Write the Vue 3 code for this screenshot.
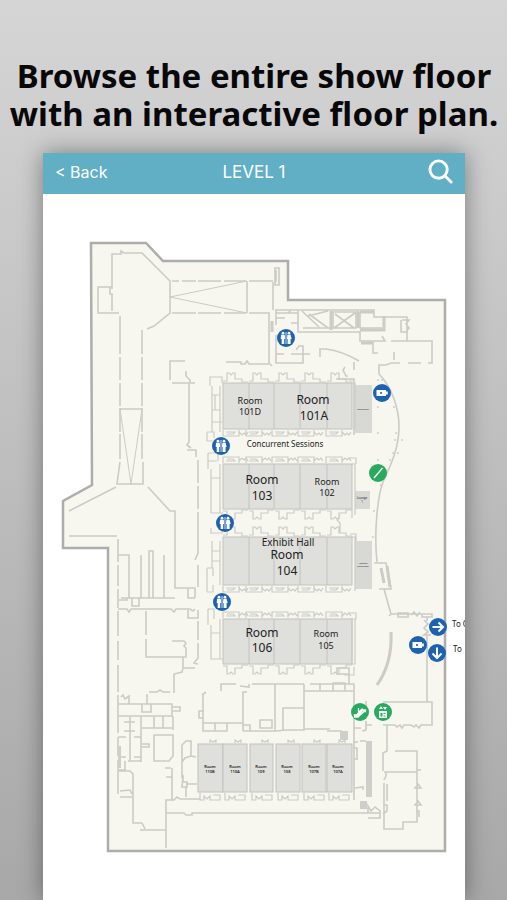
<script setup>
const roomRows = [
  { y: 383, h: 46 },
  { y: 464, h: 45 },
  { y: 537, h: 48 },
  { y: 619, h: 45 },
]
const dividers = [249, 274, 300, 327]

const smallRooms = [
  { x: 198, w: 25, cx: 210, name: '110B' },
  { x: 223, w: 24, cx: 235, name: '110A' },
  { x: 250, w: 23, cx: 261, name: '109' },
  { x: 276, w: 24, cx: 287, name: '108' },
  { x: 302, w: 24, cx: 314, name: '107B' },
  { x: 327, w: 25, cx: 338, name: '107A' },
]

const labels = [
  { x: 250, y: 404, size: 9, text: 'Room' },
  { x: 250, y: 415, size: 9, text: '101D' },
  { x: 313, y: 404, size: 12, text: 'Room' },
  { x: 314, y: 420, size: 12, text: '101A' },
  { x: 285, y: 447, size: 8, text: 'Concurrent Sessions' },
  { x: 262, y: 484, size: 12, text: 'Room' },
  { x: 262, y: 500, size: 12, text: '103' },
  { x: 327, y: 485, size: 9, text: 'Room' },
  { x: 327, y: 496, size: 9, text: '102' },
  { x: 288, y: 546, size: 10, text: 'Exhibit Hall' },
  { x: 287, y: 559, size: 12, text: 'Room' },
  { x: 287, y: 575, size: 12, text: '104' },
  { x: 262, y: 637, size: 12, text: 'Room' },
  { x: 262, y: 652, size: 12, text: '106' },
  { x: 326, y: 637, size: 9, text: 'Room' },
  { x: 326, y: 649, size: 9, text: '105' },
  { x: 363, y: 410, size: 2, text: 'Registration' },
  { x: 362, y: 499, size: 3, text: 'Lounge' },
  { x: 362, y: 503, size: 3, text: '1' },
  { x: 363, y: 564, size: 2, text: 'Attendee' },
  { x: 363, y: 567, size: 2, text: 'Registration' },
]

const pins = [
  { x: 286, y: 338, icon: 'restroom' },
  { x: 221, y: 446, icon: 'restroom' },
  { x: 225, y: 523, icon: 'restroom' },
  { x: 222, y: 602, icon: 'restroom' },
  { x: 382, y: 393, icon: 'charge' },
  { x: 418, y: 645, icon: 'charge' },
  { x: 438, y: 627, icon: 'right' },
  { x: 437, y: 653, icon: 'down' },
  { x: 378, y: 473, icon: 'stairs' },
  { x: 360, y: 712, icon: 'escalator' },
  { x: 383, y: 712, icon: 'lift' },
]
const green = ['stairs', 'escalator', 'lift']

// Door vestibules hang off a row of rooms; dir is 1 below the row, -1 above it.
const vestibules = (y, dir) =>
  [227, 253, 279, 305, 331]
    .map((x) => `M${x - 4} ${y + dir * 2}h4v${dir * 8}h2l2 ${-dir * 2}l2 ${dir * 2}h2v${-dir * 6}h7v${-dir * 3}h6`)
    .join('')

// Service closets alternating with double doors.
const closets = (y, dir) =>
  [223, 246, 272, 298, 326]
    .map((x) => `M${x} ${y + dir}v${dir * 6}h16v${-dir * 6}M${x + 3} ${y + dir * 3}h9l-2 ${dir * 2}h-6M${x + 16} ${y + dir * 3}l3 ${dir * 3}l2 ${-dir * 2}l2 ${dir * 2}l2 ${-dir * 3}`)
    .join('')

const doorPaths = [
  vestibules(383, -1),
  closets(429, 1),
  closets(464, -1),
  vestibules(509, 1),
  vestibules(537, -1),
  closets(585, 1),
  closets(619, -1),
  vestibules(664, 1),
].join('')

const smallDoors = smallRooms
  .map((r) => `M${r.x + 2} 793v7h4v-4l3 3l3 -3v4h10v-5h-7M${r.x + 12} 743v-3l3 2l3 -2v3`)
  .join('')

const outline = 'M91 243H146L163 261H288V300H445V851H108V548H63V501L92 485Z'

const walls = [
  // north-west lobby
  'M112 289V254H121V251L124 253H142L170 281V313L154 326L147 329M112 287H98V313H119M110 287V294H112V311',
  'M120 316V354M120 357V380M120 383V406M120 408V432M120 434V459M120 462L117 484H143V462M142 330V354M142 357V380M142 383V406M142 408V432M142 434V459',
  'M120 409H142',
  'M172 281H179M182 281H196M198 281H221M224 281H246M249 281H273M172 313H196M198 313H221M224 313H246M249 313H270',
  'M247 281V313M273 282V310M275 268H279V285H275ZM276 270V282',
  'M170 380V361H185M186 371V376L190 380V382M172 383H195M189 383V442L187 445L191 448M187 450H196V457M198 460V483M198 486V509M198 512V553L195 560M198 565V587',
  // west wing
  'M69 511L116 487M148 487L170 511H175V588H195V598M69 536H117M118 539V562M118 565V586M118 589V608M118 611V636M118 641V660M118 665V692M118 695V711',
  'M118 555H129V598M141 555V598M149 551H153V598H149ZM164 555V598M121 598H175M132 598H139V606H132ZM119 600H127V598M188 588V598H195',
  'M118 609H127L129 612L131 609H171L174 612L176 609H190L193 611L195 609M188 610V618H198V610M198 621V640M198 643V658L194 663L198 664',
  'M146 611V635M146 639V657H186V648L184 646L186 643L184 641H172M183 657V668H195M183 668L182 672L174 674V693M149 692H157L160 690L163 692H170M147 694V704',
  'M118 704H172V716H118ZM142 704H151V712H142ZM173 707H180V711H173M118 716V733M118 737V756M118 760V794M121 697L123 695L125 699L129 696V704',
  'M130 717V761M141 717V762M118 737H126M134 737H141M124 722H135M124 731H135M118 757H126M134 757H141M128 761H141M125 761V770H118M119 771H130L133 774V823H142L145 829M140 830H166M120 791L130 790L132 794M120 797H132',
  'M142 728H153M154 716V728H163M163 716V728H173M173 716V730M142 744H149V747H142M154 735H173V756L169 761H154ZM172 768V800M165 768H171M166 777H172M166 848V800H174L177 797L180 799M166 813H184L186 815H192V813H362',
  'M182 778V745L186 741H191V756L185 758L182 762M191 756L196 757M183 775V782H187V787H182ZM186 787V797M186 784H197M180 799H200',
  // meeting rooms in the centre south
  'M221 691V684H236M240 686L249 687V684M252 684H304M203 695V723H243M202 695L206 692M203 723V731H227V723M215 723V731M204 711H199V718H203M243 731V692H247M275 684V731M243 725H250V731H243M243 731H276L286 730H304V684M283 731V708H304M260 720H272V728H260Z',
  'M310 684H354V722M304 691H354M304 729H330M327 731H342M320 684V691M333 691V683H345V691M349 684V668H337V674H349',
  // restrooms and loading, north
  'M226 362H241V364H245L247 361L249 364H269M269 313V363L272 366M276 313H298V323H291M276 310V325M276 335V363H303V346H299L296 350M276 354H284M291 354H310M276 318H285M288 313L291 310',
  'M298 310V332H360M303 328H330M302 311L319 327M328 311L308 316M309 314L328 328M333 312H356V328H333ZM334 328L355 313M335 314L354 328M360 312V328H382',
  'M275 310H374V317H407V341H391M360 331V341H385L382 336M373 341V353H378M391 341H432V363H428M391 363H400M408 363H421M394 352V360M402 320H409L406 324L409 328L406 332H401V320',
  'M320 357V349H326Q342 351 359 361M354 362V370M345 367L343 370L346 376H348M336 379H354V435',
  // concourse facade
  'M391 363L386 365H379V374C391 386 399 407 399 427C399 450 389 468 383 482C377 498 374 535 377 562M374 563H386L391 589H379M384 589L391 614L389 616M391 614H432V617H422V614M398 613H408V617H398ZM411 615L414 612L417 616L420 612M427 617V621M424 620L428 624L424 628L428 632L424 635H431',
  'M427 636V702M383 702H432V725H421L419 728L416 725L414 727L411 725H404L402 728L400 725L397 727L395 725H383M387 725V751L383 753V771M395 751H417V822H403V829H384V783M384 772H417M417 770H421M386 773V776L384 780M387 784V801M384 805H387V811L383 814',
  'M415 788H421L418 784ZM415 805H421L418 801ZM417 811H419V817',
  // service core, south-east
  'M354 692V748H357V759H354M354 800V742H358M366 701V711M366 721V730L362 731M366 725H372M361 728H354M366 741H360M355 759H358M355 788L363 787V790M368 813V806L371 811L375 807L380 811V818H368M362 813H380',
].join('')

// Left-hand service strip along the session rooms.
const serviceStrip = [
  'M222 383V377H210V386M212 386V432M212 395H220M212 410H220M215 395V410M220 386V432M212 422H222M207 432H214V438M207 432V441M207 441H214M208 453V469M208 461H217M211 469V513M211 478H220M220 464V513M211 513H223M208 453H218V461',
  'M211 528V533H223M212 541V568M212 551H220M212 561H220M220 541V585M207 568H213V576M207 568V592M207 592H213V585M208 609V625M208 609H214V619M211 625V659H223M220 619V659M211 633H220',
].join('')

const rightStrip =
  'M352 383H355V429M349 380H354M352 464H355V509M348 458H356V464M352 509V518M355 515V509M352 537H355V591M350 534H356V541M348 613H356V619H350M352 619V664H355V619M344 675H354V667M340 533V523L337 520L340 515'

const facadeStuds = [
  [378, 380], [382, 380], [378, 407], [394, 407], [378, 433], [396, 433], [402, 440],
  [395, 440], [398, 453], [393, 453], [378, 460], [390, 460], [381, 485], [374, 511], [373, 537],
]
</script>

<template>
  <main class="page">
    <h1 class="headline">Browse the entire show floor with an interactive floor plan.</h1>
    <section class="device">
      <header class="bar">
        <button class="back" type="button">&lt; Back</button>
        <h2 class="title">LEVEL 1</h2>
        <button class="search" type="button" aria-label="Search">
          <svg viewBox="0 0 26 26">
            <circle cx="11" cy="11" r="9" />
            <path d="M17.500 17.500L24 24" />
          </svg>
        </button>
      </header>

      <svg class="plan" viewBox="43 194 422 706" role="img" aria-label="Level 1 floor plan">
        <path class="outline" :d="outline" />

        <g class="rooms">
          <rect v-for="r in roomRows" :key="r.y" x="223" :y="r.y" width="129" :height="r.h" />
          <path v-for="r in roomRows" :key="'d' + r.y" :d="dividers.map((x) => `M${x} ${r.y}v${r.h}`).join('')" />
          <rect v-for="r in smallRooms" :key="r.name" :x="r.x" y="744" :width="r.w" height="48" />
        </g>
        <g class="annex">
          <rect x="355" y="385" width="17" height="48" />
          <rect x="355" y="491" width="15" height="18" />
          <rect x="355" y="541" width="17" height="48" />
        </g>

        <path class="wall" :d="walls" />
        <path class="wall thin" d="M247 281L170 297L247 313M120 409L131 484L142 409" />
        <path class="wall light" :d="doorPaths + smallDoors + serviceStrip + rightStrip" />
        <path class="wall heavy" d="M272 321V332M331 311V330M358 311V328M360 330H384V316M361 343H373M360 312H374M381 568L384 583M387 566L390 587" />
        <path class="wall curve" d="M391 632C392 655 387 671 377 685" />
        <path class="core" d="M340 731H348V740H340ZM366 741H372V797H366ZM360 801H367V809H360ZM118 746H121V768H118Z" />
        <circle v-for="(s, i) in facadeStuds" :key="i" class="stud" :cx="s[0]" :cy="s[1]" r="1" />

        <g class="labels">
          <text v-for="(l, i) in labels" :key="i" :x="l.x" :y="l.y" :font-size="l.size">{{ l.text }}</text>
          <g v-for="r in smallRooms" :key="r.name" class="tiny">
            <text :x="r.cx" y="768">Room</text>
            <text :x="r.cx" y="773">{{ r.name }}</text>
          </g>
        </g>
        <g class="exits">
          <text x="452" y="627">To C</text>
          <text x="453" y="652">To</text>
        </g>

        <g v-for="(p, i) in pins" :key="i" class="pin" :transform="`translate(${p.x} ${p.y})`">
          <circle r="9" :class="green.includes(p.icon) ? 'green' : 'blue'" />
          <g v-if="p.icon === 'restroom'" class="solid">
            <circle cx="-3" cy="-4.800" r="1.400" />
            <circle cx="3" cy="-4.800" r="1.400" />
            <path d="M-5 -3.200H-1.200L-0.900 1H-1.800V6H-4.300V1H-5.300ZM1.400 -3.200H4.600L5.700 1H4.600V6H1.600V1H0.900Z" />
            <rect x="-0.400" y="-6" width="0.800" height="12" />
          </g>
          <g v-else-if="p.icon === 'charge'" class="solid">
            <path d="M-5.500 -3H4V-1.500H5.800V1.500H4V3H-5.500Z" />
            <circle class="blue" r="1.100" cx="-1" />
          </g>
          <path v-else-if="p.icon === 'right'" class="arrow" d="M-5.500 0H4.500M0.500 -4.500L5 0L0.500 4.500" />
          <path v-else-if="p.icon === 'down'" class="arrow" d="M0 -5.500V4.500M-4.500 0.500L0 5L4.500 0.500" />
          <path v-else-if="p.icon === 'stairs'" class="line" d="M-4 5L4.500 -5" />
          <path v-else-if="p.icon === 'escalator'" class="line" d="M-5.500 4.500H-3L3 -2H5.500V-0.500H4L-2 5H-5.500V3H-3.500L2.500 -3.500M-1.500 -4V0" />
          <g v-else class="solid">
            <rect x="-4" y="-1" width="8" height="7" />
            <path d="M-2 -6L0 -3H-4ZM2 -2L0 -5H4Z" />
            <path class="green" d="M-2.500 1H-0.500V4.500H-2.500ZM0.500 1H2.500V2H0.500ZM0.500 3.500H2.500V4.500H0.500Z" />
          </g>
        </g>
      </svg>
    </section>
  </main>
</template>

<style>
body {
  margin: 0;
  background: #a8a8a8;
}
</style>

<style scoped>
.page {
  min-height: 100vh;
  box-sizing: border-box;
  padding: 57px 42px 0 43px;
  overflow: hidden;
  background: linear-gradient(#d5d5d5, #a8a8a8);
}

.headline {
  margin: 0 -40px 20px;
  font: 700 33px/38px "Noto Sans", sans-serif;
  text-align: center;
  color: #080808;
}

.device {
  background: #fff;
  box-shadow: 0 0 22px rgba(0, 0, 0, 0.4);
}

.bar {
  display: grid;
  grid-template-columns: 1fr auto 1fr;
  align-items: center;
  box-sizing: border-box;
  height: 41px;
  padding: 0 12px 4px;
  background: #60afc5;
  color: #fff;
  font-family: Inter, sans-serif;
}

.back,
.search {
  padding: 0;
  border: 0;
  background: none;
  color: inherit;
  cursor: pointer;
}

.back {
  justify-self: start;
  font: 400 16px/20px Inter, sans-serif;
}

.title {
  margin: 0;
  font-size: 17px;
  font-weight: 400;
  line-height: 20px;
}

.search {
  justify-self: end;
  display: flex;
}

.search svg {
  width: 25px;
  height: 25px;
  fill: none;
  stroke: #fff;
  stroke-width: 3;
  stroke-linecap: round;
}

.plan {
  display: block;
  width: 100%;
  height: auto;
}

.outline {
  fill: #f7f7ef;
  stroke: #adadab;
  stroke-width: 2.500;
}

.rooms rect {
  fill: #dfdfdc;
  stroke: #c2c2c0;
}

.rooms path {
  stroke: #c2c2c0;
}

.annex {
  fill: #d8d8d4;
}

.wall {
  fill: none;
  stroke: #cbcbc7;
  stroke-width: 1.600;
}

.thin {
  stroke-width: 1;
}

.light {
  stroke-width: 1.200;
}

.heavy,
.curve {
  stroke-width: 3;
}

.core {
  fill: #cececa;
}

.stud {
  fill: #cfcfcb;
}

.labels,
.exits {
  font-family: "Noto Sans", sans-serif;
  fill: #222;
}

.labels {
  text-anchor: middle;
}

.tiny {
  font-size: 4px;
  font-weight: 600;
}

.exits {
  font-size: 8px;
}

.blue {
  fill: #1d62b0;
}

.green {
  fill: #29aa5f;
}

.solid {
  fill: #fff;
}

.arrow,
.line {
  fill: none;
  stroke: #fff;
  stroke-width: 2;
}

.line {
  stroke-width: 1.300;
}
</style>
